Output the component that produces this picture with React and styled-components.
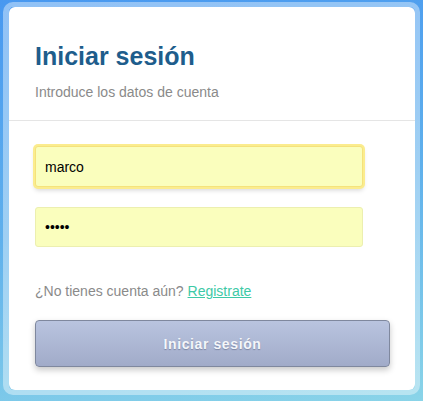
import styled, { createGlobalStyle } from 'styled-components';

const GlobalStyle = createGlobalStyle`
  html, body {
    margin: 0;
    height: 100%;
  }
  body {
    background: linear-gradient(170deg, #4898f0 0%, #5fb0ec 50%, #8ad4e8 100%);
    font-family: "Liberation Sans", Arial, sans-serif;
  }
`;

const Page = styled.div`
  padding: 2px 3px 6px 3px;
  box-sizing: border-box;
  height: 401px;
`;

const Frame = styled.div`
  height: 100%;
  box-sizing: border-box;
  border: 5px solid rgba(255, 255, 255, 0.4);
  border-left-width: 6px;
  border-radius: 10px;
`;

const Card = styled.div`
  height: 100%;
  box-sizing: border-box;
  background: #fff;
  border-radius: 6px;
  display: flex;
  flex-direction: column;
`;

const Header = styled.div`
  padding: 34px 26px 19px;
  border-bottom: 1px solid #e5e5e5;
`;

const Title = styled.h1`
  margin: 0;
  font-size: 25px;
  line-height: 30px;
  font-weight: bold;
  color: #1e5d8c;
`;

const Subtitle = styled.p`
  margin: 12px 0 0;
  font-size: 14px;
  line-height: 18px;
  color: #8a8a8a;
`;

const Body = styled.form`
  padding: 25px 25px 0 26px;
  display: flex;
  flex-direction: column;
`;

const Input = styled.input`
  width: 328px;
  height: ${(p) => (p.$focus ? 41 : 40)}px;
  box-sizing: border-box;
  padding: 0 9px;
  font-family: "Liberation Sans", Arial, sans-serif;
  font-size: 14px;
  color: #000;
  background: #fafebd;
  border: 1px solid ${(p) => (p.$focus ? '#f4e27c' : '#ecefb0')};
  border-radius: 3px;
  outline: none;
  margin-bottom: ${(p) => p.$gap || 0}px;
  box-shadow: ${(p) =>
    p.$focus
      ? '0 0 0 2px #fbec8e, 0 3px 5px rgba(0, 0, 0, 0.18)'
      : 'none'};
`;

const Question = styled.p`
  margin: 35px 0 0;
  font-size: 14px;
  line-height: 18px;
  color: #8a8a8a;
`;

const Link = styled.a`
  color: #3dc9a6;
  text-decoration: underline;
`;

const Button = styled.button`
  margin-top: 20px;
  width: 355px;
  height: 47px;
  border: 1px solid #7f889e;
  border-radius: 4px;
  background: linear-gradient(#b9c4df, #a1abc9);
  box-shadow: 0 3px 6px rgba(0, 0, 0, 0.22);
  color: #f4f6fa;
  font-family: "Liberation Sans", Arial, sans-serif;
  font-size: 14px;
  font-weight: bold;
  letter-spacing: 0.6px;
  text-shadow: 0 1px 1px rgba(70, 80, 110, 0.45);
`;

export default function App() {
  return (
    <Page>
      <GlobalStyle />
      <Frame>
        <Card>
          <Header>
            <Title>Iniciar sesión</Title>
            <Subtitle>Introduce los datos de cuenta</Subtitle>
          </Header>
          <Body onSubmit={(e) => e.preventDefault()}>
            <Input $focus $gap={20} defaultValue="marco" />
            <Input type="password" defaultValue="marco" />
            <Question>
              ¿No tienes cuenta aún? <Link href="#">Registrate</Link>
            </Question>
            <Button type="submit">Iniciar sesión</Button>
          </Body>
        </Card>
      </Frame>
    </Page>
  );
}
